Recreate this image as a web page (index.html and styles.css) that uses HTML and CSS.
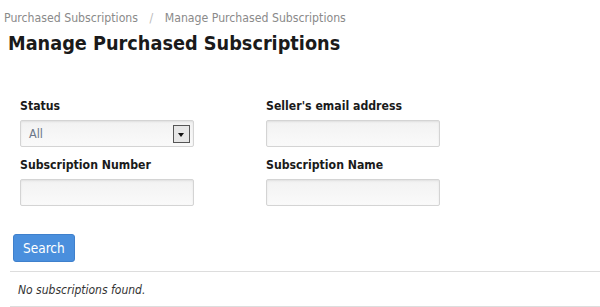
FILE: index.html
```html
<!DOCTYPE html>
<html lang="en">
<head>
  <meta charset="UTF-8" />
  <title>Manage Purchased Subscriptions</title>
  <link rel="stylesheet" href="styles.css">
</head>
<body>
  <nav class="breadcrumb">
    <a href="#">Purchased Subscriptions</a>
    <span class="sep">/</span>
    <a href="#">Manage Purchased Subscriptions</a>
  </nav>

  <h1>Manage Purchased Subscriptions</h1>

  <form class="search-form">
    <div class="fields">
      <div class="field">
        <label for="status">Status</label>
        <div class="select-box">
          <span class="select-value">All</span>
          <span class="select-arrow"></span>
        </div>
      </div>
      <div class="field">
        <label for="email">Seller's email address</label>
        <input type="text" id="email" />
      </div>
      <div class="field">
        <label for="number">Subscription Number</label>
        <input type="text" id="number" />
      </div>
      <div class="field">
        <label for="name">Subscription Name</label>
        <input type="text" id="name" />
      </div>
    </div>
    <button type="submit" class="btn-search">Search</button>
  </form>

  <section class="results">
    <p class="empty">No subscriptions found.</p>
  </section>
</body>
</html>
```

FILE: styles.css
```css
* {
  box-sizing: border-box;
}
body {
  margin: 0;
  font-family: "DejaVu Sans Condensed", "DejaVu Sans", sans-serif;
  font-size: 12px;
  color: #222;
  background: #fff;
}
.breadcrumb {
  padding: 11px 4px 0;
  height: 29px;
  font-size: 12.2px;
  color: #999;
}
.breadcrumb a {
  color: #8a8a8a;
  text-decoration: none;
}
.breadcrumb .sep {
  margin: 0 8px;
  color: #bbb;
}
h1 {
  margin: 0 8px;
  font-size: 19.7px;
  line-height: 30px;
  font-weight: bold;
  color: #1a1a1a;
}
.search-form {
  padding: 0 0 0 13px;
  margin-top: 40px;
}
.fields {
  display: grid;
  grid-template-columns: 174px 174px;
  column-gap: 72px;
  row-gap: 11px;
  padding-left: 7px;
}
.field label {
  display: block;
  font-weight: bold;
  font-size: 12.2px;
  color: #1a1a1a;
  margin-bottom: 7px;
}
.field input,
.select-box {
  display: block;
  width: 174px;
  height: 27px;
  border: 1px solid #d4d4d4;
  border-radius: 2px;
  background: linear-gradient(#f2f2f2, #fafafa);
  box-shadow: inset 0 1px 2px rgba(0,0,0,0.08);
  font-family: inherit;
}
.select-box {
  display: flex;
  align-items: center;
  justify-content: space-between;
  padding: 0 3px 0 8px;
}
.select-value {
  color: #6b7789;
  font-size: 12.5px;
}
.select-arrow {
  width: 17px;
  height: 18px;
  border: 1px solid #555;
  background: #e6e6e6;
  position: relative;
}
.select-arrow::after {
  content: "";
  position: absolute;
  left: 4px;
  top: 7px;
  border-left: 3.5px solid transparent;
  border-right: 3.5px solid transparent;
  border-top: 4px solid #111;
}
.btn-search {
  display: block;
  margin-top: 28px;
  height: 28px;
  padding: 0 9px;
  background: #4a8fdd;
  border: 1px solid #3f80cc;
  border-radius: 3px;
  color: #fff;
  font-family: inherit;
  font-size: 13.5px;
  cursor: pointer;
}
.results {
  margin: 9px 0 0 10px;
  border-top: 1px solid #ddd;
  border-bottom: 1px solid #ddd;
  padding: 11px 8px 9px;
}
.empty {
  margin: 0;
  font-style: italic;
  font-size: 12px;
  color: #333;
}
```
